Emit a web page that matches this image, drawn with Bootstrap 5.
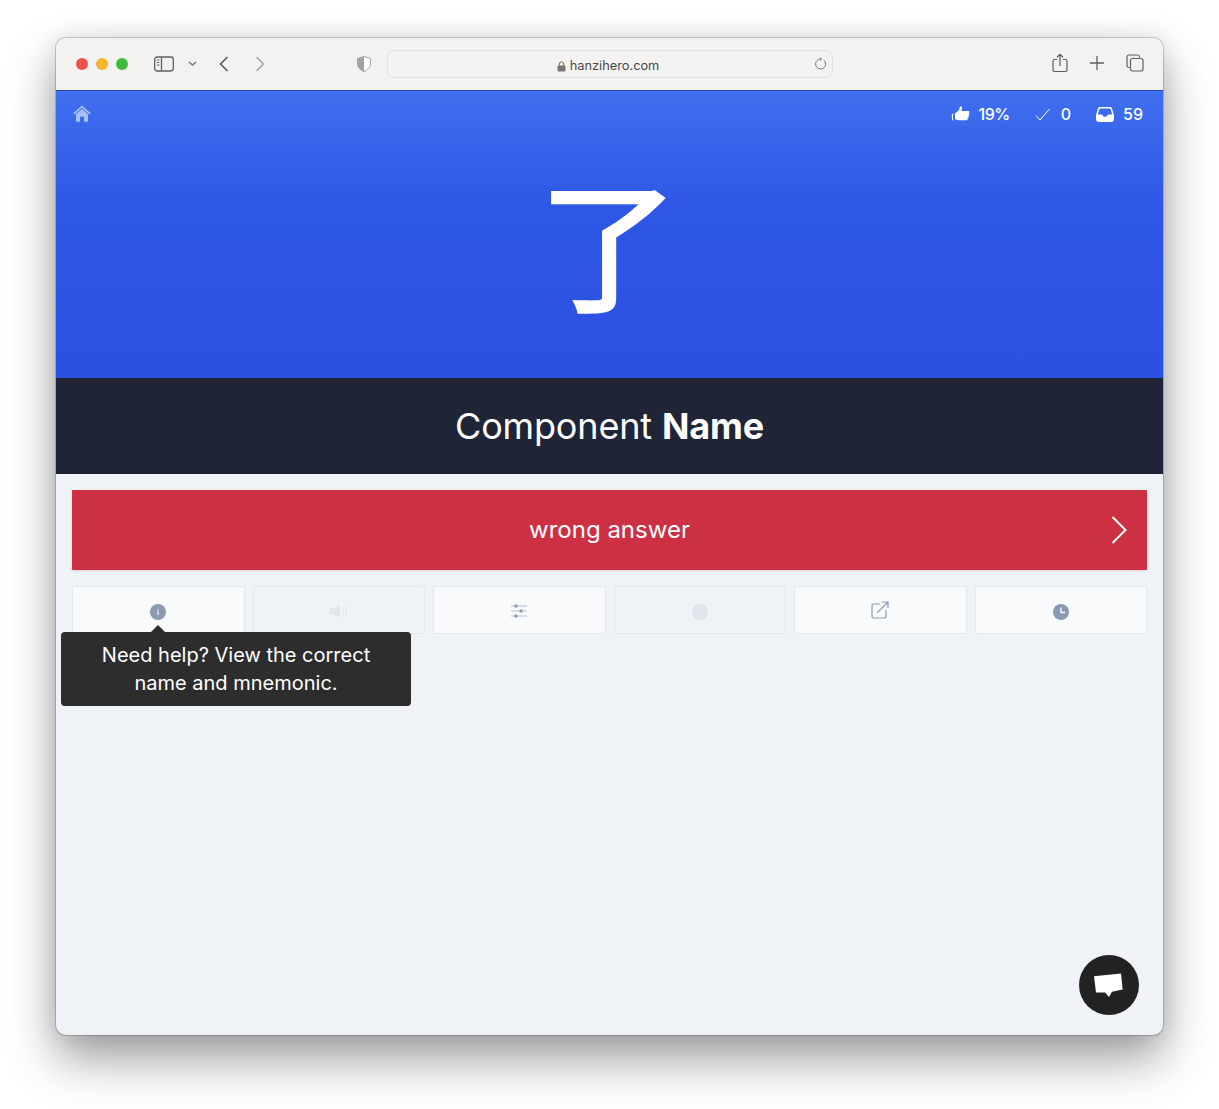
<!DOCTYPE html>
<html lang="en">
<head>
  <meta charset="UTF-8" />
  <meta name="viewport" content="width=device-width, initial-scale=1.0" />
  <title>Hanzi Hero - Component Name</title>
  <link href="https://cdn.jsdelivr.net/npm/bootstrap@5.3.3/dist/css/bootstrap.min.css" rel="stylesheet" />
  <style>
    html, body { height: 1109px; overflow: hidden; }
    body { background: #fff; padding: 38px 56px 74px; font-family: Inter, "Liberation Sans", sans-serif; }

    .mac-window {
      height: 997px;
      border-radius: 10px;
      overflow: hidden;
      background: #eff2f7;
      box-shadow: 0 0 0 1px rgba(0,0,0,.18), 0 24px 48px rgba(0,0,0,.38), 0 0 24px rgba(0,0,0,.1);
      position: relative;
    }

    /* safari toolbar */
    .safari-bar { height: 52px; background: #f3f2f0; padding-left: 20px; padding-right: 19px; }
    .dot { width: 12px; height: 12px; border-radius: 50%; }
    .dot-r { background: #ee5148; }
    .dot-y { background: #f6b32e; }
    .dot-g { background: #3dbb3c; }
    .ic-sidebar { margin-left: 26px; margin-bottom: 1px; }
    .ic-chev { margin-left: 14px; }
    .ic-back { margin-left: 22px; margin-bottom: 1px; }
    .ic-fwd { margin-left: 26px; margin-bottom: 1px; }
    .ic-shield { margin-left: 92px; margin-bottom: 1px; }
    .url-bar {
      width: 446px; height: 28px; margin-left: 16px;
      border: 1px solid #e1e0dd; border-radius: 7px; background: #f4f3f1;
      font-size: 12.8px; color: #4a4a4a; padding: 4px 4px 0 0; position: relative;
    }
    .url-reload { position: absolute; right: 5px; top: 6px; }
    .toolbar-right { margin-left: auto; gap: 22px; margin-bottom: 2px; }

    /* hero */
    .hero-top { height: 288px; background: linear-gradient(180deg, #3f70ef 0%, #2e57e5 40%, #2c50e2 100%); border-top: 1px solid #1c3fa8; }
    .hero-stats { padding: 13px 20px 0 17px; color: #fff; font-size: 16px; font-weight: 500; line-height: 20px; }
    .ic-home { margin-top: -2px; }
    .stat-pct { margin-left: 8px; letter-spacing: -.5px; }
    .ic-check { margin-left: 25px; }
    .stat-zero { margin-left: 11px; }
    .ic-inbox { margin-left: 25px; }
    .stat-inbox { margin-left: 9px; }
    .glyph-box {
      font-family: "Noto Sans CJK SC", sans-serif; font-size: 142px; line-height: 142px; font-weight: 500;
      color: #fff; text-align: center; margin-top: 44px; padding-right: 2px;
    }
    .name-bar { height: 96px; background: #1f2537; color: #fff; font-size: 36px; line-height: 96px; text-align: center; letter-spacing: -.15px; }

    /* body */
    .main-area { padding: 16px; position: relative; }
    .btn-wrong {
      height: 80px; background: #ce3043; color: #fff; font-size: 24px; border-radius: 1px;
      box-shadow: 0 1px 2px rgba(0,0,0,.12); position: relative;
    }
    .btn-arrow { position: absolute; right: 20px; top: 26px; }
    .tool-grid { display: grid; grid-template-columns: repeat(6, 1fr); gap: 8px; margin-top: 16px; }
    .tool-cell { height: 48px; background: #f8fafc; border: 1px solid #e2e8f0; border-radius: 2px; padding-top: 17px; }
    .tool-off { background: #eff2f6; }
    .ic-up { margin-top: -1px; }
    .ic-ext { margin-top: -3px; }
    .help-tip {
      position: absolute; left: 5px; top: 158px; width: 350px; height: 74px;
      background: #2d2d2d; color: #fff; border-radius: 4px;
      font-size: 20px; line-height: 28px; padding-top: 9px; text-align: center;
    }
    .help-tip::before {
      content: ""; position: absolute; left: 90px; top: -7px;
      border-left: 7px solid transparent; border-right: 7px solid transparent; border-bottom: 7px solid #2d2d2d;
    }
    .chat-btn {
      position: absolute; right: 24px; bottom: 20px; width: 60px; height: 60px;
      border-radius: 50%; background: #222;
    }
  </style>
</head>
<body>
  <div class="mac-window">
    <!-- Browser toolbar -->
    <div class="safari-bar d-flex align-items-center">
      <div class="d-flex gap-2">
        <span class="dot dot-r"></span><span class="dot dot-y"></span><span class="dot dot-g"></span>
      </div>
      <svg class="ic-sidebar" width="20" height="16" viewBox="0 0 20 16" fill="none" stroke="#5f5f5f" stroke-width="1.3"><rect x=".7" y="1" width="18.6" height="14" rx="2.4"/><path d="M7.5 1v14"/><path d="M2.8 4h2.6M2.8 6.5h2.6M2.8 9h2.6" stroke-width="1"/></svg>
      <svg class="ic-chev" width="9" height="6" viewBox="0 0 9 6" fill="none" stroke="#777" stroke-width="1.6"><path d="M1 1l3.5 3L8 1"/></svg>
      <svg class="ic-back" width="10" height="16" viewBox="0 0 10 16" fill="none" stroke="#5a5a5a" stroke-width="1.6"><path d="M8.5 1L1.5 8l7 7"/></svg>
      <svg class="ic-fwd" width="10" height="16" viewBox="0 0 10 16" fill="none" stroke="#a5a5a5" stroke-width="1.6"><path d="M1.5 1l7 7-7 7"/></svg>
      <svg class="ic-shield" width="14" height="16" viewBox="0 0 14 16"><path d="M7 .5l6.500 2v5.500c0 3.500-3 6-6.500 7.500C3.500 14 .5 11.500.5 8V2.500z" fill="#fff" stroke="#a3a3a3"/><path d="M7 .5v15C3.500 14 .5 11.500.5 8V2.500z" fill="#a3a3a3"/></svg>
      <div class="url-bar d-flex align-items-center justify-content-center gap-1">
        <svg width="9" height="11" viewBox="0 0 9 11"><rect x=".5" y="4.500" width="8" height="6" rx="1" fill="#777"/><path d="M2.300 5V3a2.200 2.200 0 0 1 4.400 0v2" fill="none" stroke="#777"/></svg>
        <span>hanzihero.com</span>
        <svg class="url-reload" width="13" height="14" viewBox="0 0 13 14" fill="none" stroke="#777" stroke-width="1"><path d="M9.800 3.200a5 5 0 1 1-3.300-1.200"/><path d="M5.800.5L7.800 2 5.800 3.700"/></svg>
      </div>
      <div class="toolbar-right d-flex align-items-center">
        <svg width="16" height="20" viewBox="0 0 16 20" fill="none" stroke="#5f5f5f" stroke-width="1.200"><path d="M5 6.500H2.500a1.500 1.500 0 0 0-1.500 1.500v9a1.500 1.500 0 0 0 1.500 1.500h11a1.500 1.500 0 0 0 1.500-1.500V8a1.500 1.500 0 0 0-1.500-1.500H11"/><path d="M8 13V1.500M5 4.200L8 1.300l3 2.900"/></svg>
        <svg width="14" height="14" viewBox="0 0 14 14" fill="none" stroke="#5f5f5f" stroke-width="1.300"><path d="M7 0v14M0 7h14"/></svg>
        <svg width="18" height="18" viewBox="0 0 18 18" fill="none" stroke="#5f5f5f" stroke-width="1.200"><path d="M3.500 13.500H3A2 2 0 0 1 1 11.500V3a2 2 0 0 1 2-2h8.500a2 2 0 0 1 2 2v.500"/><rect x="4.500" y="4.500" width="12.500" height="12.500" rx="2"/></svg>
      </div>
    </div>

    <!-- Hero -->
    <div class="hero-top">
      <div class="hero-stats d-flex align-items-center">
        <svg class="ic-home" width="18" height="17" viewBox="0 0 18 17" fill="#a9c1ff"><path d="M9 .5L.3 8.300l1.100 1.100L9 2.700l7.600 6.700 1.100-1.100z"/><path d="M3 9.300L9 4l6 5.300V16a.8.8 0 0 1-.8.800H11v-5H7v5H3.800A.8.8 0 0 1 3 16z"/></svg>
        <div class="ms-auto d-flex align-items-center">
          <svg width="20" height="16" viewBox="0 0 20 16" fill="#fff"><path d="M1.600 7.500C.5 9 .5 12.500 1.600 14.500l.9-.3c-.7-2-.7-4.500 0-6.400z"/><path d="M4 7.500l3.800-3.300c.7-1 .9-2.200 1.100-3.500.1-.7 1.700-.8 2 .6.300 1.200-.1 2.500-.6 3.700h6.700c1.900 0 1.700 2.300.7 2.500.9.600.8 2.200-.3 2.500.6.800.3 2.100-.7 2.300.2 1-.4 1.900-1.500 1.900H8c-1.600 0-2.800-.8-4-1z"/></svg>
          <span class="stat-pct">19%</span>
          <svg class="ic-check" width="15" height="13" viewBox="0 0 15 13" fill="none" stroke="#fff" stroke-width="1"><path d="M1 7.500l4 4.500L14.500 1"/></svg>
          <span class="stat-zero">0</span>
          <svg class="ic-inbox" width="18" height="15" viewBox="0 0 18 15" fill="#fff" fill-rule="evenodd"><path d="M4 0h10c1 0 1.700.6 2 1.500L18 8v4a3 3 0 0 1-3 3H3a3 3 0 0 1-3-3V8l2-6.500C2.300.6 3 0 4 0zm.2 1.500c-.4 0-.7.2-.8.600L1.800 7.500h4.400c.5 1.500 1.500 2.300 2.800 2.300s2.300-.8 2.800-2.300h4.400l-1.600-5.400c-.1-.4-.4-.6-.8-.6z"/></svg>
          <span class="stat-inbox">59</span>
        </div>
      </div>
      <div class="glyph-box">了</div>
    </div>
    <div class="name-bar">Component <strong>Name</strong></div>

    <!-- Answer area -->
    <div class="main-area">
      <div class="btn-wrong d-flex align-items-center justify-content-center">
        wrong answer
        <svg class="btn-arrow" width="16" height="28" viewBox="0 0 16 28" fill="none" stroke="#fff" stroke-width="2"><path d="M1.500 1l13 13-13 13"/></svg>
      </div>

      <div class="tool-grid">
        <div class="tool-cell d-flex justify-content-center">
          <svg width="16" height="16" viewBox="0 0 16 16"><circle cx="8" cy="8" r="8" fill="#8a9ab3"/><path d="M7.400 7.300h1.200V11H7.400zM7.400 5h1.200v1.200H7.400z" fill="#fff" opacity=".9"/></svg>
        </div>
        <div class="tool-cell tool-off d-flex justify-content-center">
          <svg class="ic-up" width="18" height="16" viewBox="0 0 18 16" fill="#e1e5ec"><path d="M0 5h4l6-4v14l-6-4H0z"/><path d="M12.500 4c1.500 2 1.500 6 0 8M15 2.500c2 3 2 8 0 11" fill="none" stroke="#e1e5ec"/></svg>
        </div>
        <div class="tool-cell d-flex justify-content-center">
          <svg class="ic-up" width="16" height="16" viewBox="0 0 16 16" fill="#8a9ab3"><path d="M0 2.500h3v1H0zM7 2.500h9v1H7zM0 7.500h8v1H0zM12 7.500h4v1h-4zM0 12.500h3v1H0zM7 12.500h9v1H7z" opacity=".6"/><circle cx="5" cy="3" r="1.800"/><circle cx="10" cy="8" r="1.800"/><circle cx="5" cy="13" r="1.800"/></svg>
        </div>
        <div class="tool-cell tool-off d-flex justify-content-center">
          <svg width="16" height="16" viewBox="0 0 16 16"><circle cx="8" cy="8" r="8" fill="#e1e5ec"/></svg>
        </div>
        <div class="tool-cell d-flex justify-content-center">
          <svg class="ic-ext" width="18" height="18" viewBox="0 0 18 18" fill="none" stroke="#8a9ab3" stroke-width="1.200"><path d="M9 3H2.500A1.500 1.500 0 0 0 1 4.500v11A1.500 1.500 0 0 0 2.500 17h11a1.500 1.500 0 0 0 1.500-1.500V9"/><path d="M6.500 11.500L17 1M11 1h6v6"/></svg>
        </div>
        <div class="tool-cell d-flex justify-content-center">
          <svg width="16" height="16" viewBox="0 0 16 16"><circle cx="8" cy="8" r="8" fill="#8a9ab3"/><path d="M8 3.500V8.500h4" fill="none" stroke="#fff" stroke-width="1.300"/></svg>
        </div>
      </div>

      <div class="help-tip">Need help? View the correct<br />name and mnemonic.</div>
    </div>

    <div class="chat-btn d-flex align-items-center justify-content-center">
      <svg width="30" height="26" viewBox="0 0 30 26" fill="#fff"><path d="M0 4.200L27 1.500l1.700 16L18 19.800 15 25l-4-4.500H2z"/></svg>
    </div>
  </div>

  <script src="https://cdn.jsdelivr.net/npm/bootstrap@5.3.3/dist/js/bootstrap.bundle.min.js"></script>
</body>
</html>
